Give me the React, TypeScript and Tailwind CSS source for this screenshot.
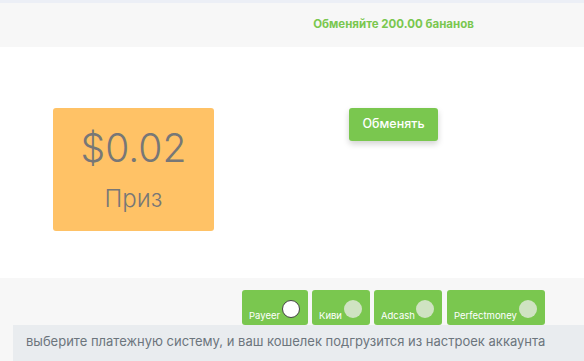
import React from "react";

const methods = [
  { name: "Payeer", w: "w-[66px]", active: true },
  { name: "Киви", w: "w-[58px]", active: false },
  { name: "Adcash", w: "w-[68px]", active: false },
  { name: "Perfectmoney", w: "w-[98px]", active: false },
];

export default function App() {
  return (
    <div className="w-[584px] h-[361px] overflow-hidden bg-white" style={{ fontFamily: "Inter, 'Noto Sans', sans-serif" }}>
      <div className="h-[3px] bg-[#eceff6]" />
      <div className="h-[44px] bg-[#f7f7f7] flex">
        <div className="w-[267px]" />
        <div className="w-[253px] flex items-center justify-center">
          <span className="text-[11.5px] font-bold text-[#7ac74f]">Обменяйте 200.00 бананов</span>
        </div>
      </div>
      <div className="h-[231px] flex">
        <div className="w-[267px] flex justify-center pt-[61px]">
          <div className="w-[161px] h-[123px] bg-[#ffc266] rounded-[3px] flex flex-col items-center">
            <div className="text-[39px] leading-none text-[#777777] mt-[20px] font-light">$0.02</div>
            <div className="text-[24px] leading-none text-[#777777] mt-[20px] font-light">Приз</div>
          </div>
        </div>
        <div className="w-[253px] flex justify-center pt-[61px]">
          <button className="w-[89px] h-[33px] bg-[#7ac74f] rounded-[3px] text-white text-[12.5px] font-medium shadow-[0_3px_6px_rgba(0,0,0,0.18)]">
            Обменять
          </button>
        </div>
      </div>
      <div className="bg-[#f7f7f7] h-[83px] flex flex-col">
        <div className="flex gap-[4px] pl-[242px] pt-[12px]">
          {methods.map((m, i) => (
            <div key={m.name} className={`${m.w} ${i === 3 ? "ml-[1px]" : ""} h-[35px] bg-[#7ac74f] rounded-[3px] flex items-end justify-between pl-[7px] pr-[8px] pb-[3px]`}>
              <span className="text-[9.5px] text-white leading-[12px]">{m.name}</span>
              <span
                className={
                  m.active
                    ? "w-[18px] h-[18px] rounded-full bg-white border-[1.5px] border-[#444] mb-[4px]"
                    : "w-[18px] h-[18px] rounded-full bg-[#cfe3c2] mb-[4px]"
                }
              />
            </div>
          ))}
        </div>
        <div className="ml-[13px] h-[40px] bg-[#e9ecef] flex items-center pl-[13px] pb-[3px]">
          <span className="text-[13px] text-[#6c757d]">выберите платежную систему, и ваш кошелек подгрузится из настроек аккаунта</span>
        </div>
      </div>
    </div>
  );
}
